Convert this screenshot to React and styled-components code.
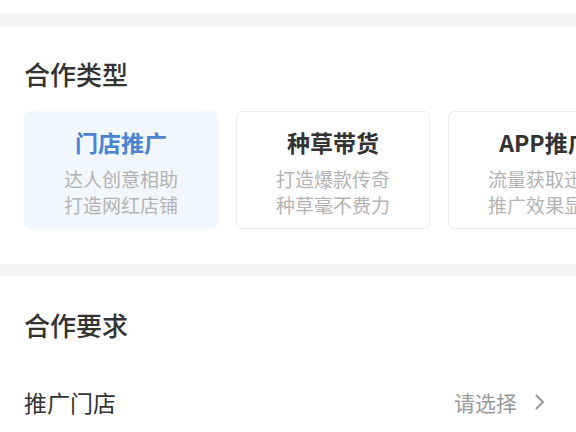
import React from "react";
import styled, { createGlobalStyle } from "styled-components";

const GlobalStyle = createGlobalStyle`
  html, body {
    margin: 0;
    padding: 0;
    background: #ffffff;
    font-family: "Noto Sans CJK SC", "Noto Sans", sans-serif;
    color: #333333;
  }
`;

const Page = styled.div`
  width: 576px;
  height: 432px;
  overflow: hidden;
  padding-top: 14px;
  box-sizing: border-box;
`;

const Divider = styled.div`
  height: 12px;
  background: #f5f5f5;
`;

const Section = styled.section`
  background: #ffffff;
  padding: ${(p) => p.$pad || "30px 0 35px 24px"};
`;

const SectionTitle = styled.h2`
  margin: 0;
  font-size: 26px;
  line-height: 36px;
  font-weight: 500;
  color: #333333;
`;

const CardRow = styled.div`
  display: flex;
  gap: 18px;
  margin-top: 19px;
  overflow: hidden;
`;

const Card = styled.div`
  flex: 0 0 194px;
  height: 118px;
  box-sizing: border-box;
  padding-top: 15px;
  border-radius: 6px;
  text-align: center;
  background: ${(p) => (p.$active ? "#f2f7fd" : "#ffffff")};
  border: 1px solid ${(p) => (p.$active ? "#f2f7fd" : "#ececec")};
`;

const CardTitle = styled.div`
  font-size: 23px;
  line-height: 30px;
  font-weight: 700;
  color: ${(p) => (p.$active ? "#4a84cf" : "#333333")};
  white-space: nowrap;
`;

const CardText = styled.div`
  margin-top: 9px;
  font-size: 19px;
  line-height: 26px;
  color: #b3b3b3;
  white-space: nowrap;
`;

const Row = styled.div`
  display: flex;
  align-items: center;
  justify-content: space-between;
  margin-top: 44px;
  padding-right: 31px;
`;

const RowLabel = styled.span`
  font-size: 23px;
  line-height: 30px;
  color: #333333;
`;

const RowValue = styled.span`
  display: flex;
  align-items: center;
  font-size: 21px;
  line-height: 30px;
  color: #999999;
`;

const Chevron = styled.svg`
  margin-left: 18px;
`;

const types = [
  { title: "门店推广", lines: ["达人创意相助", "打造网红店铺"], active: true },
  { title: "种草带货", lines: ["打造爆款传奇", "种草毫不费力"] },
  { title: "APP推广", lines: ["流量获取迅速", "推广效果显著"] },
];

const App = () => {
  return (
    <Page>
      <GlobalStyle />
      <Divider />
      <Section>
        <SectionTitle>合作类型</SectionTitle>
        <CardRow>
          {types.map((t) => (
            <Card key={t.title} $active={t.active}>
              <CardTitle $active={t.active}>{t.title}</CardTitle>
              <CardText>
                {t.lines[0]}
                <br />
                {t.lines[1]}
              </CardText>
            </Card>
          ))}
        </CardRow>
      </Section>
      <Divider />
      <Section $pad="31px 0 20px 24px">
        <SectionTitle>合作要求</SectionTitle>
        <Row>
          <RowLabel>推广门店</RowLabel>
          <RowValue>
            请选择
            <Chevron width="10" height="16" viewBox="0 0 10 16">
              <polyline
                points="1.5,1.5 8,8 1.5,14.5"
                fill="none"
                stroke="#999999"
                strokeWidth="2"
                strokeLinecap="round"
                strokeLinejoin="round"
              />
            </Chevron>
          </RowValue>
        </Row>
      </Section>
    </Page>
  );
};

export default App;
